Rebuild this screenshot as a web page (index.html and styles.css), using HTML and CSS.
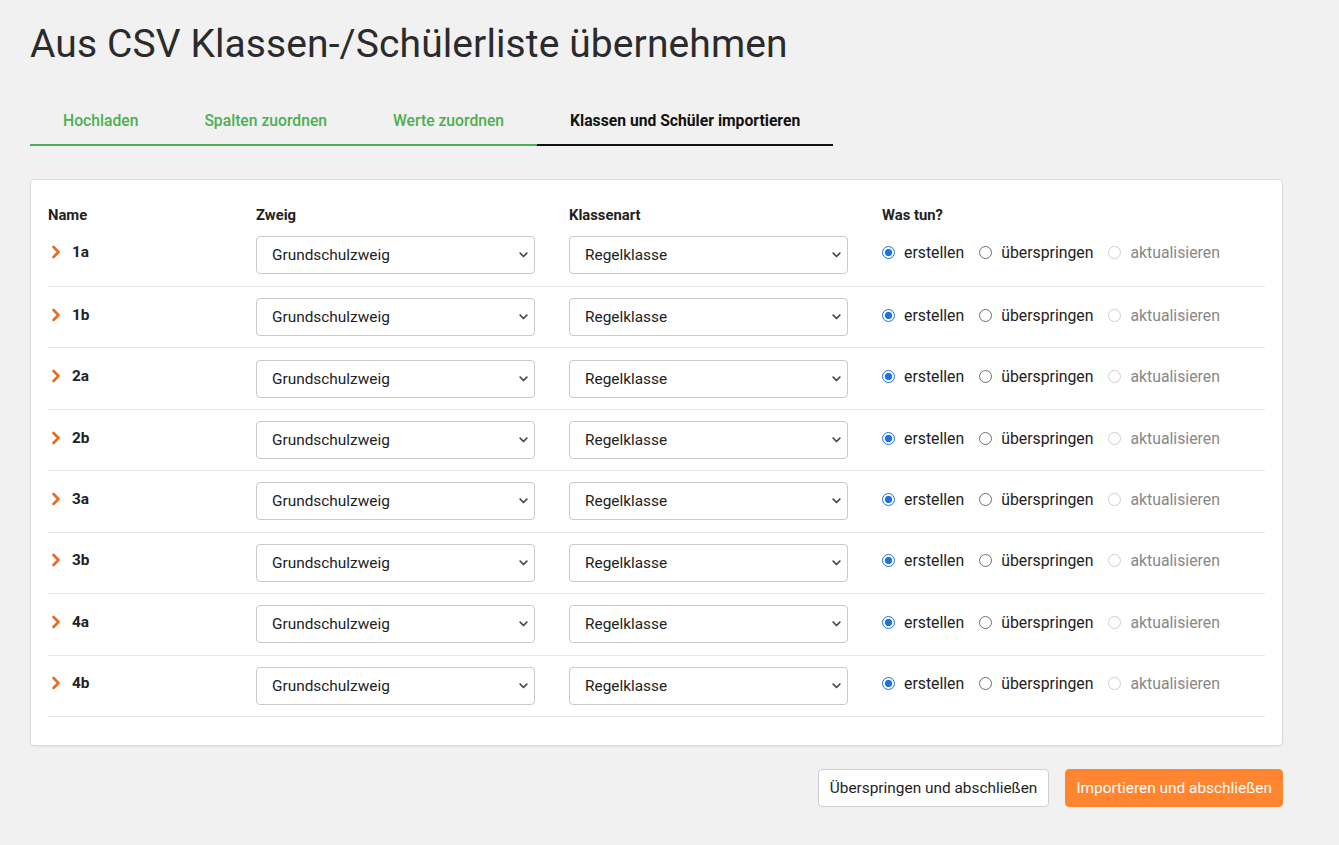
FILE: index.html
```html
<!DOCTYPE html>
<html lang="de">
<head>
<meta charset="utf-8">
<title>Aus CSV Klassen-/Schülerliste übernehmen</title>
<link rel="stylesheet" href="styles.css">
</head>
<body>
<main class="page">
  <h1 class="title">Aus CSV Klassen-/Schülerliste übernehmen</h1>
  <nav class="tabs">
    <a class="tab done">Hochladen</a>
    <a class="tab done">Spalten zuordnen</a>
    <a class="tab done">Werte zuordnen</a>
    <a class="tab active">Klassen und Schüler importieren</a>
  </nav>

  <section class="card">
    <div class="grid head">
      <div>Name</div><div>Zweig</div><div>Klassenart</div><div>Was tun?</div>
    </div>
    <div id="rows"></div>
  </section>

  <div class="actions">
    <button class="btn btn-secondary">Überspringen und abschließen</button>
    <button class="btn btn-primary">Importieren und abschließen</button>
  </div>
</main>
<script src="app.js"></script>
</body>
</html>
```
FILE: app.js
```js
const names = ["1a","1b","2a","2b","3a","3b","4a","4b"];
const chevDown = '<svg class="arrow" width="9" height="6" viewBox="0 0 9 6"><path d="M1.2 1.2l3.3 3.3 3.3-3.3" fill="none" stroke="#4a4a4a" stroke-width="1.7" stroke-linecap="round" stroke-linejoin="round"/></svg>';
const chevRight = '<svg class="chev" width="10" height="14" viewBox="0 0 10 14"><path d="M2.5 2l5 5-5 5" fill="none" stroke="#ea6a1f" stroke-width="2.6" stroke-linecap="round" stroke-linejoin="round"/></svg>';
const rows = document.getElementById('rows');
rows.innerHTML = names.map(n => `
  <div class="grid row">
    <div class="name">${chevRight}<span>${n}</span></div>
    <div><div class="select-wrap"><select class="select"><option>Grundschulzweig</option></select>${chevDown}</div></div>
    <div><div class="select-wrap"><select class="select"><option>Regelklasse</option></select>${chevDown}</div></div>
    <div class="radios">
      <label class="radio"><input type="radio" name="r${n}" checked><span>erstellen</span></label>
      <label class="radio"><input type="radio" name="r${n}"><span>überspringen</span></label>
      <label class="radio disabled"><input type="radio" name="r${n}" disabled><span>aktualisieren</span></label>
    </div>
  </div>`).join('');
```
FILE: styles.css
```css
* { box-sizing: border-box; }
html, body { margin: 0; padding: 0; }
body {
  background: #f1f1f1;
  font-family: Roboto, "Liberation Sans", Arial, sans-serif;
  color: #222;
}
.page { padding: 0 56px 0 30px; }
.title {
  margin: 0;
  padding-top: 21px;
  font-size: 39px;
  line-height: 46px;
  font-weight: 400;
  color: #2b2b2b;
  letter-spacing: 0.1px;
}
.tabs {
  display: flex;
  margin-top: 39px;
}
.tab {
  padding: 0 33px;
  font-size: 15.7px;
  line-height: 20px;
  height: 40px;
  padding-top: 5px;
  border-bottom: 2px solid #4caf50;
  color: #4caf50;
  font-weight: 500;
}
.tab.active {
  color: #111;
  font-weight: 700;
  border-bottom-color: #111;
}
.card {
  margin-top: 33px;
  background: #fff;
  border: 1px solid #dcdcdc;
  border-radius: 4px;
  box-shadow: 0 1px 2px rgba(0,0,0,0.06);
  padding: 26px 17px 28px 17px;
}
.grid {
  display: grid;
  grid-template-columns: 208px 313px 313px 1fr;
  align-items: center;
}
.head {
  font-size: 14.8px;
  font-weight: 700;
  color: #222;
  line-height: 18px;
}
.row {
  border-bottom: 1px solid #e6e6e6;
  height: 61.43px;
}
.row:first-child { height: 63px; padding-bottom: 1px; }
.name {
  display: flex;
  align-items: center;
  gap: 11px;
  font-weight: 700;
  font-size: 15.4px;
  padding-left: 3px;
  margin-top: -5px;
}
.chev { display: block; }
.select-wrap {
  position: relative;
  width: 279px;
}
.select {
  appearance: none;
  -webkit-appearance: none;
  width: 100%;
  height: 38px;
  border: 1px solid #c9c9c9;
  border-radius: 4px;
  background: #fff;
  padding: 0 30px 0 15px;
  font-family: Roboto, "Liberation Sans", Arial, sans-serif;
  font-size: 15.4px;
  color: #222;
}
.arrow {
  position: absolute;
  right: 7px;
  top: 16px;
  pointer-events: none;
}
.radios {
  display: flex;
  align-items: center;
  gap: 15px;
  margin-top: -4px;
}
.radio {
  display: flex;
  align-items: center;
  gap: 9px;
  font-size: 15.8px;
  color: #222;
}
.radio.disabled { color: #888; }
.radio input {
  appearance: none;
  -webkit-appearance: none;
  margin: 0;
  width: 13px;
  height: 13px;
  border: 1px solid #6f6f6f;
  border-radius: 50%;
  background: #fff;
}
.radio input:checked {
  border: 1px solid #1a73e8;
  background: radial-gradient(circle, #1a73e8 0 3.4px, #fff 3.9px);
}
.radio input:disabled {
  border-color: #cfcfcf;
}
.actions {
  display: flex;
  justify-content: flex-end;
  gap: 16px;
  margin-top: 23px;
}
.btn {
  height: 38px;
  border-radius: 4px;
  padding: 0 11px;
  font-family: Roboto, "Liberation Sans", Arial, sans-serif;
  font-size: 15.4px;
}
.btn-secondary {
  background: #fff;
  border: 1px solid #cfcfcf;
  color: #1e1e1e;
}
.btn-primary {
  background: #ff8531;
  border: 1px solid #ff8531;
  color: #fff;
  padding: 0 10px;
}
```
